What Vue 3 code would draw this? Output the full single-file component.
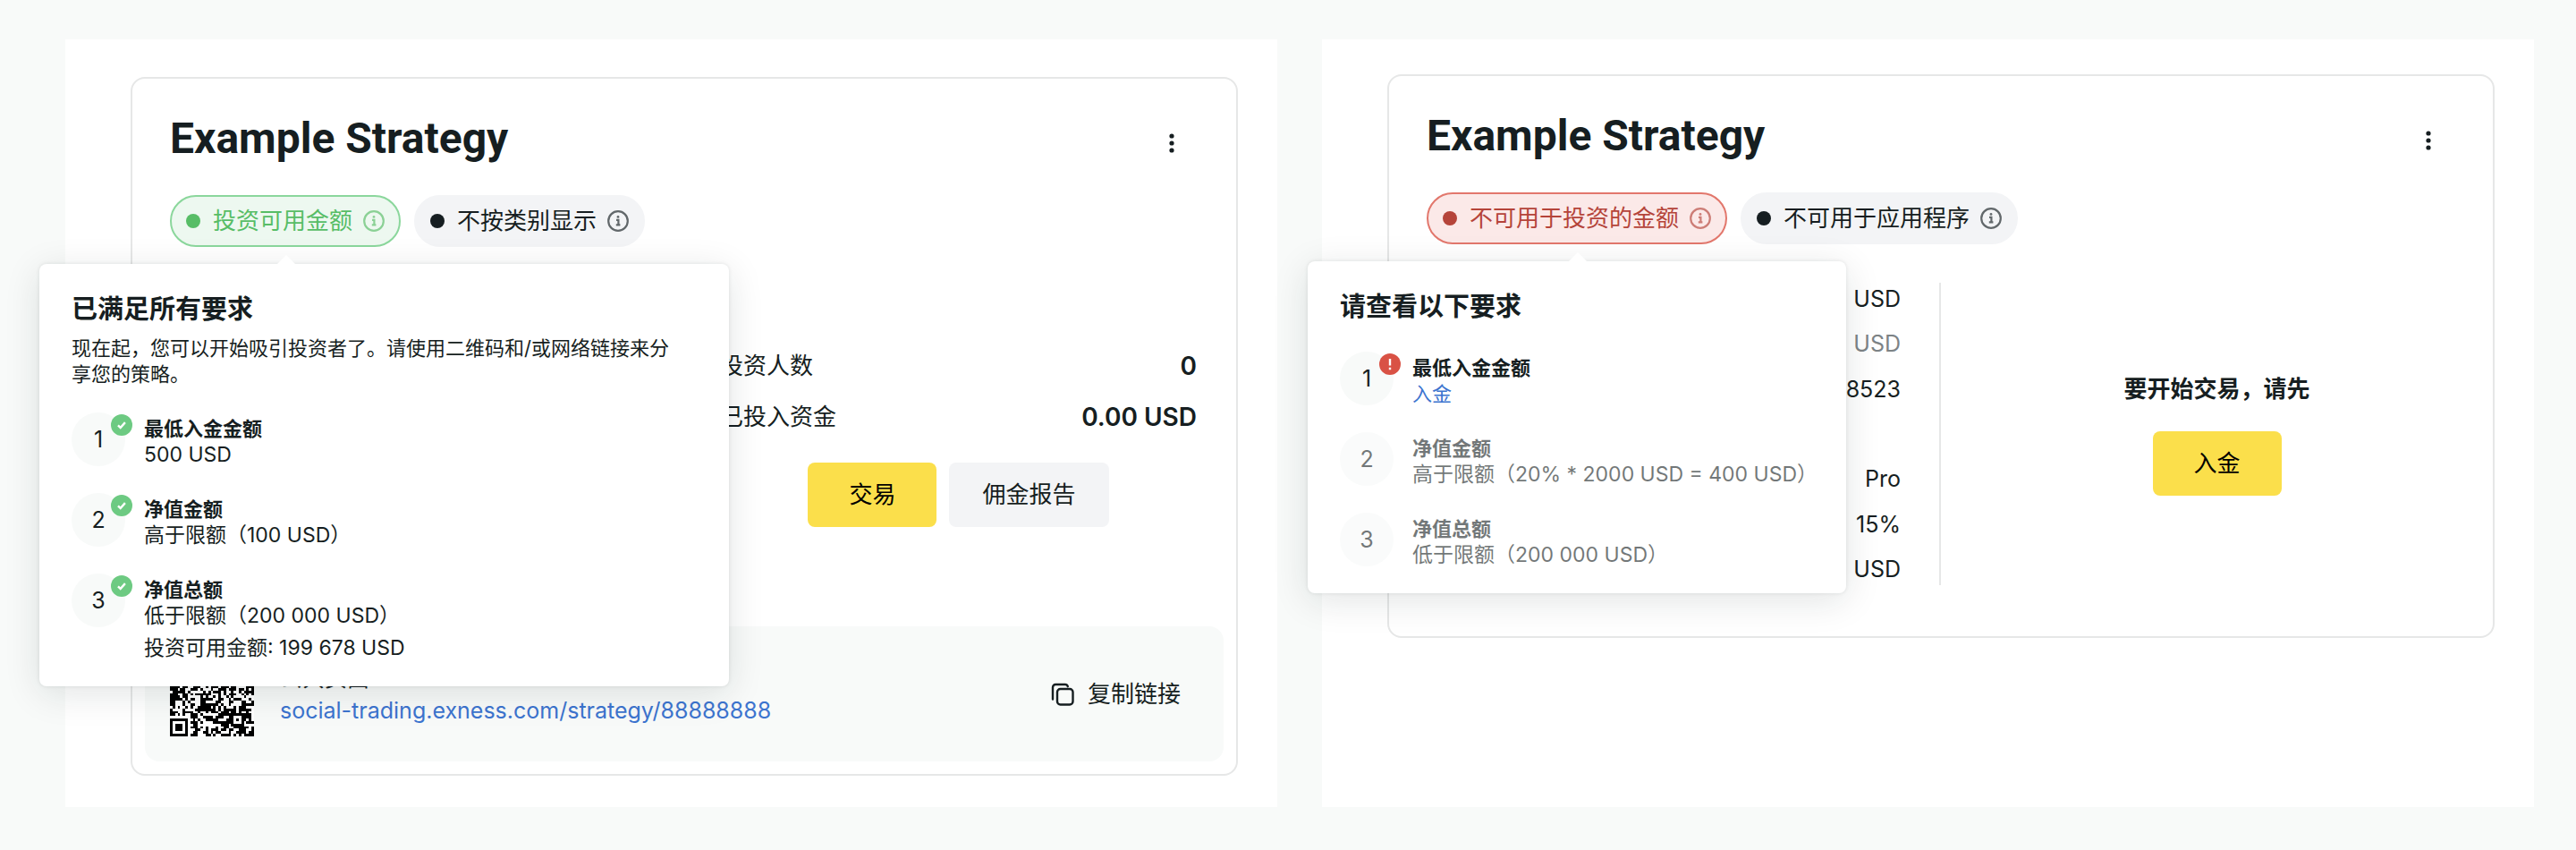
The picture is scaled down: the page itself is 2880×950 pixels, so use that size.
<script setup>
const ready = {
  title: '已满足所有要求',
  text: '现在起，您可以开始吸引投资者了。请使用二维码和/或网络链接来分享您的策略。',
  steps: [
    { label: '最低入金金额', value: '500 USD', state: 'done' },
    { label: '净值金额', value: '高于限额（100 USD）', state: 'done' },
    { label: '净值总额', value: '低于限额（200 000 USD）', note: '投资可用金额: 199 678 USD', state: 'done' },
  ],
}

const pending = {
  title: '请查看以下要求',
  steps: [
    { label: '最低入金金额', link: '入金', state: 'error' },
    { label: '净值金额', value: '高于限额（20% * 2000 USD = 400 USD）', state: 'idle' },
    { label: '净值总额', value: '低于限额（200 000 USD）', state: 'idle' },
  ],
}

const values = [
  { text: 'USD' },
  { text: 'USD', muted: true },
  { text: '8523' },
  { text: '' },
  { text: 'Pro' },
  { text: '15%' },
  { text: 'USD' },
]

const QR = 33

function ring(x, y, left, top, size) {
  const dx = x - left
  const dy = y - top
  if (dx < 0 || dy < 0 || dx >= size || dy >= size) return null
  return Math.min(dx, dy, size - 1 - dx, size - 1 - dy)
}

function buildQr() {
  let seed = 20477
  let d = ''
  const finders = [[0, 0], [QR - 7, 0], [0, QR - 7]]
  for (let y = 0; y < QR; y++) {
    for (let x = 0; x < QR; x++) {
      seed = (seed * 1103515245 + 12345) % 2147483648
      let on = seed / 2147483648 < 0.56
      for (const [fx, fy] of finders) {
        const r = ring(x, y, fx - 1, fy - 1, 9)
        if (r !== null) on = r !== 0 && r !== 2
      }
      const a = ring(x, y, QR - 9, QR - 9, 5)
      if (a !== null) on = a !== 1
      if (on) d += `M${x} ${y}h1v1h-1z`
    }
  }
  return d
}

const qrPath = buildQr()
</script>

<template>
  <main class="page">
    <section class="panel panel-first">
      <article class="card">
        <header class="head">
          <h2>Example Strategy</h2>
          <button class="menu" type="button" aria-label="Menu">
            <svg viewBox="0 0 6 24" width="6" height="24"><circle cx="3" cy="4" r="2.6" /><circle cx="3" cy="12" r="2.6" /><circle cx="3" cy="20" r="2.6" /></svg>
          </button>
        </header>
        <div class="pills">
          <div class="anchor">
            <button class="pill green" type="button">
              <i class="dot"></i><span>投资可用金额</span>
              <svg class="info" viewBox="0 0 24 24"><circle cx="12" cy="12" r="10.8" /><path d="M10 10.8h2.4v5.6M9.8 16.4h4.6" /><circle class="fill" cx="12" cy="7.4" r="1.4" /></svg>
            </button>
            <div class="popover wide">
              <h3>{{ ready.title }}</h3>
              <p class="desc">{{ ready.text }}</p>
              <ol class="steps">
                <li v-for="(s, i) in ready.steps" :key="i" :class="s.state">
                  <span class="num">{{ i + 1 }}
                    <svg class="badge" viewBox="0 0 24 24"><circle cx="12" cy="12" r="12" /><path d="M8 12.4l2.7 2.7 5.2-6" /></svg>
                  </span>
                  <div class="info-text">
                    <strong>{{ s.label }}</strong>
                    <span>{{ s.value }}</span>
                    <span v-if="s.note" class="note">{{ s.note }}</span>
                  </div>
                </li>
              </ol>
            </div>
          </div>
          <button class="pill" type="button">
            <i class="dot"></i><span>不按类别显示</span>
            <svg class="info" viewBox="0 0 24 24"><circle cx="12" cy="12" r="10.8" /><path d="M10 10.8h2.4v5.6M9.8 16.4h4.6" /><circle class="fill" cx="12" cy="7.4" r="1.4" /></svg>
          </button>
        </div>
        <div class="stats">
          <dl>
            <div><dt>投资人数</dt><dd>0</dd></div>
            <div><dt>已投入资金</dt><dd>0.00 USD</dd></div>
          </dl>
          <div class="actions">
            <button class="btn yellow" type="button">交易</button>
            <button class="btn" type="button">佣金报告</button>
          </div>
        </div>
        <footer class="share">
          <svg class="qr" :viewBox="`0 0 ${QR} ${QR}`" shape-rendering="crispEdges"><rect :width="QR" :height="QR" /><path :d="qrPath" /></svg>
          <div class="share-text">
            <span class="share-title">公共页面</span>
            <a href="#">social-trading.exness.com/strategy/88888888</a>
          </div>
          <button class="copy" type="button">
            <svg viewBox="0 0 26 26" width="26" height="26"><rect x="7" y="7" width="17.5" height="17.5" rx="3.5" /><path d="M2 18.5V5.2a3.2 3.2 0 0 1 3.2-3.2h10.6a3.2 3.2 0 0 1 3 2.2" /></svg>
            复制链接
          </button>
        </footer>
      </article>
    </section>

    <section class="panel">
      <article class="card">
        <header class="head">
          <h2>Example Strategy</h2>
          <button class="menu" type="button" aria-label="Menu">
            <svg viewBox="0 0 6 24" width="6" height="24"><circle cx="3" cy="4" r="2.6" /><circle cx="3" cy="12" r="2.6" /><circle cx="3" cy="20" r="2.6" /></svg>
          </button>
        </header>
        <div class="pills">
          <div class="anchor">
            <button class="pill red" type="button">
              <i class="dot"></i><span>不可用于投资的金额</span>
              <svg class="info" viewBox="0 0 24 24"><circle cx="12" cy="12" r="10.8" /><path d="M10 10.8h2.4v5.6M9.8 16.4h4.6" /><circle class="fill" cx="12" cy="7.4" r="1.4" /></svg>
            </button>
            <div class="popover narrow">
              <h3>{{ pending.title }}</h3>
              <ol class="steps">
                <li v-for="(s, i) in pending.steps" :key="i" :class="s.state">
                  <span class="num">{{ i + 1 }}
                    <svg v-if="s.state === 'error'" class="badge" viewBox="0 0 24 24"><circle cx="12" cy="12" r="12" /><path d="M12 6v7.5M12 15.8v2.4" /></svg>
                  </span>
                  <div class="info-text">
                    <strong>{{ s.label }}</strong>
                    <a v-if="s.link" href="#">{{ s.link }}</a>
                    <span v-else>{{ s.value }}</span>
                  </div>
                </li>
              </ol>
            </div>
          </div>
          <button class="pill" type="button">
            <i class="dot"></i><span>不可用于应用程序</span>
            <svg class="info" viewBox="0 0 24 24"><circle cx="12" cy="12" r="10.8" /><path d="M10 10.8h2.4v5.6M9.8 16.4h4.6" /><circle class="fill" cx="12" cy="7.4" r="1.4" /></svg>
          </button>
        </div>
        <div class="split">
          <ul class="values">
            <li v-for="(v, i) in values" :key="i" :class="{ muted: v.muted }">{{ v.text }}</li>
          </ul>
          <div class="cta">
            <strong>要开始交易，请先</strong>
            <button class="btn yellow" type="button">入金</button>
          </div>
        </div>
      </article>
    </section>
  </main>
</template>

<style>
body {
  background: #f8faf9;
}
</style>

<style scoped>
* {
  box-sizing: border-box;
  margin: 0;
  padding: 0;
}
.page {
  display: grid;
  grid-template-columns: 1fr 1fr;
  gap: 50px;
  min-height: 100vh;
  padding: 44px 47px 48px 73px;
  background: #f8faf9;
  color: #161e21;
  font-family: Inter, "Noto Sans CJK SC", sans-serif;
  font-size: 26px;
  line-height: 36px;
}
button {
  border: 0;
  background: none;
  color: inherit;
  font: inherit;
  white-space: nowrap;
}
a {
  color: #3c74cf;
  text-decoration: none;
}
ol, ul {
  list-style: none;
}
.panel {
  padding: 39px 44px 35px 73px;
  background: #fff;
}
.panel-first {
  padding-top: 42px;
}
.card {
  border: 2px solid #e6e7e7;
  border-radius: 16px;
}
.head {
  display: flex;
  justify-content: space-between;
  align-items: flex-start;
  padding: 39px 44px 25px 42px;
}
h2 {
  font: 700 48px/56px Roboto, sans-serif;
}
.menu {
  display: grid;
  place-items: center;
  width: 56px;
  height: 66px;
}
.menu svg {
  fill: #161e21;
}
.pills {
  display: flex;
  gap: 15px;
  padding: 0 42px;
}
.anchor {
  position: relative;
}
.pill {
  display: flex;
  align-items: center;
  height: 58px;
  padding: 0 16px;
  border: 2px solid #f3f4f6;
  border-radius: 29px;
  background: #f3f4f6;
}
.dot {
  width: 16px;
  height: 16px;
  margin-right: 14px;
  border-radius: 50%;
  background: currentColor;
}
.info {
  width: 24px;
  height: 24px;
  margin-left: 12px;
  fill: none;
  stroke: currentColor;
  stroke-width: 2.2;
  opacity: 0.65;
}
.info .fill {
  fill: currentColor;
  stroke: none;
}
.green {
  border-color: #8bd79c;
  background: #edf8f0;
  color: #57bd66;
}
.red {
  border-color: #e2776c;
  background: #fbe9e8;
  color: #b5443a;
}
.popover {
  position: absolute;
  z-index: 2;
  top: 77px;
  padding: 33px 36px 28px;
  border-radius: 8px;
  background: #fff;
  box-shadow: 0 0 4px rgba(20, 30, 33, 0.1), 0 8px 40px rgba(20, 30, 33, 0.12);
  font-size: 22px;
  line-height: 29px;
}
.popover::before {
  content: "";
  position: absolute;
  top: -10px;
  width: 22px;
  height: 11px;
  background: #fff;
  clip-path: polygon(50% 0, 100% 100%, 0 100%);
}
.wide {
  left: -146px;
  width: 771px;
}
.wide::before {
  left: 265px;
}
.narrow {
  left: -133px;
  width: 602px;
}
.narrow::before {
  left: 291px;
}
h3 {
  font-size: 29px;
  font-weight: 600;
  line-height: 36px;
}
.desc {
  margin-top: 11px;
  padding-right: 16px;
}
.steps {
  display: grid;
  gap: 28px;
  margin-top: 32px;
}
.desc + .steps {
  margin-top: 28px;
}
.steps li {
  display: flex;
  gap: 21px;
}
.num {
  position: relative;
  flex: none;
  width: 60px;
  height: 60px;
  border-radius: 50%;
  background: #f8faf9;
  font-size: 25px;
  line-height: 60px;
  text-align: center;
}
.badge {
  position: absolute;
  top: 2px;
  right: -8px;
  width: 24px;
  height: 24px;
  fill: #6dca82;
  stroke: #fff;
  stroke-width: 2.4;
}
.badge circle {
  stroke: none;
}
.badge path {
  fill: none;
}
.error .badge {
  fill: #d95245;
}
.idle {
  opacity: 0.6;
}
.info-text {
  display: flex;
  flex-direction: column;
  padding-top: 4px;
  font-size: 23px;
}
.info-text strong {
  font-size: 22px;
  font-weight: 600;
}
.info-text a {
  font-size: 22px;
}
.note {
  margin-top: 7px;
}
.stats {
  width: calc(50% - 84px);
  margin: 115px 44px 0 auto;
}
.stats dl {
  display: grid;
  gap: 21px;
}
.stats dl div {
  display: flex;
  justify-content: space-between;
}
dd {
  font-size: 28px;
  font-weight: 600;
}
.actions {
  display: flex;
  justify-content: center;
  gap: 14px;
  margin-top: 33px;
}
.btn {
  min-width: 144px;
  height: 72px;
  padding: 0 37px;
  border-radius: 8px;
  background: #f3f4f6;
}
.btn.yellow {
  background: #fbdf4b;
  color: #000;
}
.share {
  display: flex;
  align-items: center;
  margin: 111px 14px 14px;
  padding: 29px 28px 28px;
  border-radius: 16px;
  background: #f8faf9;
}
.qr {
  width: 94px;
  height: 94px;
  margin-right: 29px;
}
.qr rect {
  fill: #fff;
}
.share-text {
  display: flex;
  flex: 1;
  flex-direction: column;
  font-size: 25px;
}
.copy {
  display: flex;
  align-items: center;
  gap: 15px;
  padding: 0 20px;
}
.copy svg {
  fill: none;
  stroke: #161e21;
  stroke-width: 2.4;
  stroke-linecap: round;
}
.split {
  display: grid;
  grid-template-columns: 1fr 1fr;
  margin: 43px 0 57px;
}
.values {
  display: grid;
  align-content: space-between;
  min-height: 338px;
  padding-right: 43px;
  border-right: 2px solid #e6e7e7;
  font-size: 25px;
  text-align: right;
}
.values li {
  height: 36px;
}
.values .muted {
  color: #7d8386;
}
.cta {
  display: flex;
  flex-direction: column;
  align-items: center;
  justify-content: center;
  gap: 29px;
}
.cta strong {
  font-weight: 600;
}
</style>
